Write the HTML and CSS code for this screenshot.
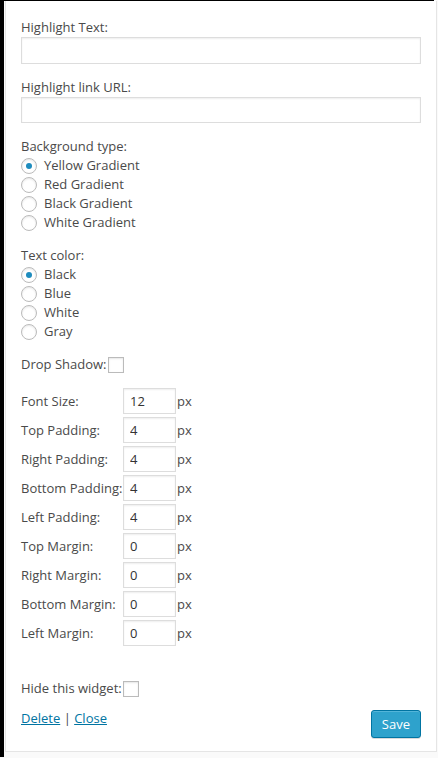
FILE: index.html
```html
<!DOCTYPE html>
<html>
<head>
<meta charset="utf-8">
<link rel="stylesheet" href="styles.css">
</head>
<body>
<div class="frame">
  <form class="widget">
    <p class="field">
      <label class="lbl">Highlight Text:</label>
      <input class="text" type="text">
    </p>
    <p class="field">
      <label class="lbl">Highlight link URL:</label>
      <input class="text" type="text">
    </p>
    <div class="group">
      <div class="lbl">Background type:</div>
      <label class="opt"><input type="radio" name="bg" checked> Yellow Gradient</label>
      <label class="opt"><input type="radio" name="bg"> Red Gradient</label>
      <label class="opt"><input type="radio" name="bg"> Black Gradient</label>
      <label class="opt"><input type="radio" name="bg"> White Gradient</label>
    </div>
    <div class="group">
      <div class="lbl">Text color:</div>
      <label class="opt"><input type="radio" name="tc" checked> Black</label>
      <label class="opt"><input type="radio" name="tc"> Blue</label>
      <label class="opt"><input type="radio" name="tc"> White</label>
      <label class="opt"><input type="radio" name="tc"> Gray</label>
    </div>
    <div class="check-line">Drop Shadow:<input type="checkbox" class="cb"></div>
    <div class="sizes">
      <span class="k">Font Size:</span><input class="num" value="12"><span class="u">px</span>
      <span class="k">Top Padding:</span><input class="num" value="4"><span class="u">px</span>
      <span class="k">Right Padding:</span><input class="num" value="4"><span class="u">px</span>
      <span class="k">Bottom Padding:</span><input class="num" value="4"><span class="u">px</span>
      <span class="k">Left Padding:</span><input class="num" value="4"><span class="u">px</span>
      <span class="k">Top Margin:</span><input class="num" value="0"><span class="u">px</span>
      <span class="k">Right Margin:</span><input class="num" value="0"><span class="u">px</span>
      <span class="k">Bottom Margin:</span><input class="num" value="0"><span class="u">px</span>
      <span class="k">Left Margin:</span><input class="num" value="0"><span class="u">px</span>
    </div>
    <div class="check-line hide">Hide this widget:<input type="checkbox" class="cb"></div>
    <div class="actions">
      <div class="links"><a href="#">Delete</a> | <a href="#">Close</a></div>
      <button type="button" class="save">Save</button>
    </div>
  </form>
</div>
</body>
</html>
```

FILE: styles.css
```css
html, body {
  margin: 0;
  padding: 0;
  background: #fafafa;
}
body {
  font-family: "Open Sans", sans-serif;
  font-size: 13px;
  color: #4a4a4a;
}
.frame {
  border-top: 1px solid #000;
  border-left: 4px solid #000;
  width: 434px;
  height: 757px;
  box-sizing: border-box;
  padding-left: 1px;
}
.widget {
  width: 432px;
  box-sizing: border-box;
  background: #fff;
  border: 1px solid #e5e5e5;
  border-top: none;
  padding: 17px 15px 13px 15px;
  margin: 0;
}
.field {
  margin: 0 0 14px;
}
.lbl {
  display: block;
  line-height: 19px;
}
.text {
  display: block;
  box-sizing: border-box;
  width: 100%;
  height: 27px;
  margin: 0;
  border: 1px solid #ddd;
  box-shadow: inset 0 1px 2px rgba(0,0,0,.07);
  background: #fff;
  font: inherit;
  padding: 3px 5px;
  outline: none;
}
.field + .field .text { height: 26px; }
.group {
  margin: 0 0 14px;
}
.opt {
  display: flex;
  align-items: center;
  height: 19px;
  line-height: 19px;
}
.opt input {
  -webkit-appearance: none;
  appearance: none;
  width: 16px;
  height: 16px;
  box-sizing: border-box;
  border: 1px solid #bbb;
  border-radius: 50%;
  background: #fff;
  box-shadow: inset 0 1px 2px rgba(0,0,0,.1);
  margin: 0 7px 0 0;
  display: inline-flex;
  align-items: center;
  justify-content: center;
  flex: none;
}
.opt input:checked::before {
  content: "";
  width: 6px;
  height: 6px;
  border-radius: 50%;
  background: #1e8cbe;
}
.check-line {
  display: flex;
  align-items: center;
  line-height: 19px;
  margin: 0 0 14px;
}
.cb {
  -webkit-appearance: none;
  appearance: none;
  width: 16px;
  height: 16px;
  box-sizing: border-box;
  border: 1px solid #bbb;
  background: #fff;
  box-shadow: inset 0 1px 2px rgba(0,0,0,.1);
  margin: 0 0 0 2px;
}
.sizes {
  display: grid;
  grid-template-columns: 102px 53px auto;
  row-gap: 3px;
  align-items: center;
  margin-bottom: 33px;
}
.k { line-height: 19px; }
.num {
  box-sizing: border-box;
  width: 53px;
  height: 26px;
  margin: 0;
  border: 1px solid #ddd;
  box-shadow: inset 0 1px 2px rgba(0,0,0,.07);
  font: inherit;
  color: #333;
  padding: 3px 6px;
  outline: none;
}
.u { padding-left: 1px; }
.hide { margin-bottom: 11px; }
.hide .cb { margin-left: 1px; }
.actions {
  display: flex;
  justify-content: space-between;
  align-items: flex-start;
}
.links { line-height: 19px; }
.links a { color: #0074a2; text-decoration: underline; }
.save {
  margin-top: 1px;
  height: 28px;
  line-height: 26px;
  padding: 0 10px;
  font: inherit;
  color: #fff;
  background: #2ea2cc;
  border: 1px solid #0074a2;
  border-radius: 3px;
  box-shadow: inset 0 1px 0 rgba(120,200,230,.5), 0 1px 0 rgba(0,0,0,.15);
}
```
